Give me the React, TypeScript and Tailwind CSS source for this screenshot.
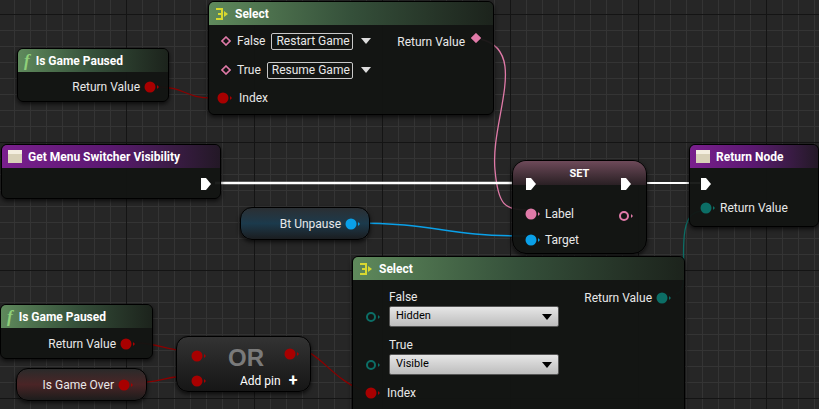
import React from "react";

const F = { fontFamily: "Roboto, 'Liberation Sans', sans-serif" };

function Node({ x, y, w, h, children, r = "rounded-md" }: any) {
  return (
    <div
      className={`absolute ${r} border border-black bg-[#121412]/95 shadow-[0_2px_4px_rgba(0,0,0,0.7)] overflow-hidden text-[12px] text-[#e8e8e8]`}
      style={{ left: x, top: y, width: w, height: h }}
    >
      {children}
    </div>
  );
}

function Header({ color, icon, title }: any) {
  const bg =
    color === "green"
      ? "bg-gradient-to-r from-[#5f8a5c] via-[#35503a] to-[#1c231c]"
      : "bg-gradient-to-r from-[#7a1f8e] via-[#5a1870] to-[#231826]";
  return (
    <div className={`h-[23px] ${bg} flex items-center gap-1 px-1.5 font-bold text-[12px] text-white whitespace-nowrap`}>
      {icon}
      <span>{title}</span>
    </div>
  );
}

const FIcon = () => <span className="italic text-[#8fd07a] text-[17px] leading-none mr-0.5" style={{ fontFamily: "'Liberation Serif', serif" }}>f</span>;
const BoxIcon = () => (
  <span className="w-[14px] h-[13px] bg-[#d8d0b8] border-t-[4px] border-[#f4eee0] inline-block mr-0.5" />
);
const SelIcon = () => (
  <svg width="16" height="12" viewBox="0 0 16 12"><path d="M1 1h6v10H1M3 6h4" stroke="#d8d830" strokeWidth="2" fill="none"/><path d="M9 3l4 3-4 3z" fill="#d8d830"/></svg>
);

const Pin = ({ c, hollow = false }: any) => (
  <svg width="16" height="12" viewBox="0 0 16 12" className="inline-block">
    <circle cx="6" cy="6" r={hollow ? 4 : 5.5} fill={hollow ? "none" : c} stroke={c} strokeWidth={hollow ? 2 : 0} />
    <path d="M13 4l2 2-2 2z" fill={c} />
  </svg>
);
const Diamond = ({ c, fill = false }: any) => (
  <svg width="10" height="10" viewBox="0 0 10 10" className="inline-block"><path d="M5 1l4 4-4 4-4-4z" fill={fill ? c : "none"} stroke={c} strokeWidth="1.6"/></svg>
);
const Exec = () => (
  <svg width="12" height="14" viewBox="0 0 12 14"><path d="M1 1h5l5 6-5 6H1z" fill="white"/></svg>
);

const Combo = ({ t, w }: any) => (
  <span className="inline-flex items-center gap-2 whitespace-nowrap">
    <span className="border border-[#c8c8c8] px-1 h-[17px] leading-[15px] rounded-[2px] box-border" style={{ width: w }}>{t}</span>
    <svg width="10" height="6"><path d="M0 0h10L5 6z" fill="#ddd"/></svg>
  </span>
);

const Drop = ({ t }: any) => (
  <div className="w-[170px] h-[21px] rounded-[2px] bg-gradient-to-b from-[#e6e6e6] to-[#bdbdbd] border border-[#555] flex items-center justify-between px-1.5 text-[11px] text-black">
    <span>{t}</span>
    <svg width="10" height="6"><path d="M0 0h10L5 6z" fill="#000"/></svg>
  </div>
);

export default function App() {
  return (
    <div className="relative w-[819px] h-[409px] overflow-hidden bg-[#262626]" style={F}>
      <div
        className="absolute inset-0"
        style={{
          backgroundImage:
            "linear-gradient(to right,#141414 1px,transparent 1px),linear-gradient(to bottom,#141414 1px,transparent 1px),linear-gradient(to right,#343434 1px,transparent 1px),linear-gradient(to bottom,#343434 1px,transparent 1px)",
          backgroundSize: "128px 128px,128px 128px,16px 16px,16px 16px",
          backgroundPosition: "126px 14px,126px 14px,14px 14px,14px 14px",
        }}
      />
      <svg className="absolute inset-0" width="819" height="409">
        <path d="M158 87 C185 87,185 98,212 98" stroke="#8a0000" strokeWidth="1.3" fill="none" />
        <path d="M480 39 C530 50,490 120,495 170 C498 205,505 210,526 210" stroke="#e07aa8" strokeWidth="1.3" fill="none" />
        <line x1="215" y1="183" x2="516" y2="183" stroke="#fff" strokeWidth="2.5" />
        <line x1="635" y1="183" x2="700" y2="183" stroke="#fff" strokeWidth="2" />
        <path d="M352 223 C440 223,440 236,526 236" stroke="#0aa0e8" strokeWidth="1.5" fill="none" />
        <path d="M676 294 C690 290,680 260,685 230 C688 214,695 211,704 211" stroke="#0c6e66" strokeWidth="1.3" fill="none" />
        <path d="M136 343 C160 343,165 351,190 351" stroke="#8a0000" strokeWidth="1.3" fill="none" />
        <path d="M130 383 C160 383,165 376,190 376" stroke="#8a0000" strokeWidth="1.3" fill="none" />
        <path d="M295 349 C320 349,330 380,367 392" stroke="#8a0000" strokeWidth="1.3" fill="none" />
      </svg>

      {/* Is Game Paused top */}
      <Node x={17} y={48} w={152} h={54}>
        <Header color="green" icon={<FIcon />} title="Is Game Paused" />
        <div className="flex justify-end items-center gap-1 pr-2 pt-[6px]">Return Value <Pin c="#a80000" /></div>
      </Node>

      {/* Select top */}
      <Node x={208} y={1} w={286} h={114}>
        <Header color="green" icon={<SelIcon />} title="Select" />
        <div className="flex justify-between pl-3 pr-3 pt-[6px]">
          <div className="flex flex-col gap-[9px]">
            <div className="flex items-center gap-1.5 h-[20px]"><Diamond c="#e07aa8" /> False <Combo t="Restart Game" w={82} /></div>
            <div className="flex items-center gap-1.5 h-[20px]"><Diamond c="#e07aa8" /> True <Combo t="Resume Game" w={86} /></div>
            <div className="flex items-center gap-1.5 -ml-1"><Pin c="#a80000" /> Index</div>
          </div>
          <div className="flex items-start gap-1.5 pt-[2px]">Return Value <Diamond c="#e07aa8" fill /></div>
        </div>
      </Node>

      {/* Get Menu Switcher Visibility */}
      <Node x={1} y={144} w={220} h={55}>
        <Header color="purple" icon={<BoxIcon />} title="Get Menu Switcher Visibility" />
        <div className="flex justify-end pr-2 pt-[9px]"><Exec /></div>
      </Node>

      {/* SET */}
      <div className="absolute left-[512px] top-[160px] w-[135px] h-[94px] rounded-[14px] border border-black bg-[#121412]/95 shadow-[0_2px_4px_rgba(0,0,0,0.7)] overflow-hidden text-[12px] text-[#e8e8e8]">
        <div className="h-[24px] bg-gradient-to-b from-[#6e4a5a] to-[#2a2024] text-center font-bold text-white leading-[26px] text-[11px]">SET</div>
        <div className="absolute left-[12px] top-[16px]"><Exec /></div>
        <div className="absolute right-[14px] top-[16px]"><Exec /></div>
        <div className="absolute left-[12px] top-[44px] flex items-center gap-1"><Pin c="#e07aa8" /> Label</div>
        <div className="absolute right-[12px] top-[45px]"><Pin c="#e07aa8" hollow /></div>
        <div className="absolute left-[12px] top-[70px] flex items-center gap-1"><Pin c="#0aa0e8" /> Target</div>
      </div>

      {/* Return Node */}
      <Node x={689} y={144} w={130} h={83}>
        <Header color="purple" icon={<BoxIcon />} title="Return Node" />
        <div className="pl-2.5 pt-[9px]"><Exec /></div>
        <div className="flex items-center gap-1 pl-2.5 pt-[8px]"><Pin c="#0c6e66" /> Return Value</div>
      </Node>

      {/* Bt Unpause */}
      <div className="absolute left-[240px] top-[207px] w-[130px] h-[33px] rounded-[12px] border border-black bg-gradient-to-b from-[#2a2f33] via-[#1b3a4c] to-[#1a1d20] shadow-[0_2px_4px_rgba(0,0,0,0.7)] flex items-center justify-end gap-1 pr-2 text-[12px] text-[#e8e8e8]">
        Bt Unpause <Pin c="#0aa0e8" />
      </div>

      {/* Select bottom */}
      <Node x={352} y={256} w={333} h={160}>
        <Header color="green" icon={<SelIcon />} title="Select" />
        <div className="absolute right-[12px] top-[32px] flex items-center gap-1">Return Value <Pin c="#0c6e66" /></div>
        <div className="pl-3 pt-[8px] flex flex-col">
          <div className="pl-[24px]">False</div>
          <div className="flex items-center gap-[8px]"><Pin c="#0c6e66" hollow /><Drop t="Hidden" /></div>
          <div className="pl-[24px] pt-[9px]">True</div>
          <div className="flex items-center gap-[8px]"><Pin c="#0c6e66" hollow /><Drop t="Visible" /></div>
          <div className="flex items-center gap-[6px] pt-[9px]"><Pin c="#a80000" /> Index</div>
        </div>
      </Node>

      {/* Is Game Paused 2 */}
      <Node x={0} y={304} w={153} h={55}>
        <Header color="green" icon={<FIcon />} title="Is Game Paused" />
        <div className="flex justify-end items-center gap-1 pr-4 pt-[7px]">Return Value <Pin c="#a80000" /></div>
      </Node>

      {/* Is Game Over */}
      <div className="absolute left-[16px] top-[368px] w-[131px] h-[33px] rounded-[12px] border border-black bg-gradient-to-b from-[#2a2a2a] via-[#4a2426] to-[#1c1c1c] shadow-[0_2px_4px_rgba(0,0,0,0.7)] flex items-center justify-end gap-1 pr-3 text-[12px] text-[#e8e8e8]">
        Is Game Over <Pin c="#a80000" />
      </div>

      {/* OR */}
      <div className="absolute left-[176px] top-[336px] w-[135px] h-[56px] rounded-[12px] border border-black bg-gradient-to-b from-[#333] to-[#161616] shadow-[0_2px_4px_rgba(0,0,0,0.7)] text-[12px] text-[#e8e8e8]">
        <div className="absolute left-[14px] top-[9px]"><Pin c="#a80000" /></div>
        <div className="absolute left-[14px] top-[34px]"><Pin c="#a80000" /></div>
        <div className="absolute right-[10px] top-[7px]"><Pin c="#a80000" /></div>
        <div className="absolute left-[51px] top-[8px] text-[24px] leading-[26px] font-bold text-[#7a7a7a]" style={{ fontFamily: "'Liberation Sans', sans-serif" }}>OR</div>
        <div className="absolute left-[63px] top-[36px] leading-[14px] flex items-center gap-2 text-white">Add pin <span className="font-bold text-[16px] leading-none">+</span></div>
      </div>
    </div>
  );
}
